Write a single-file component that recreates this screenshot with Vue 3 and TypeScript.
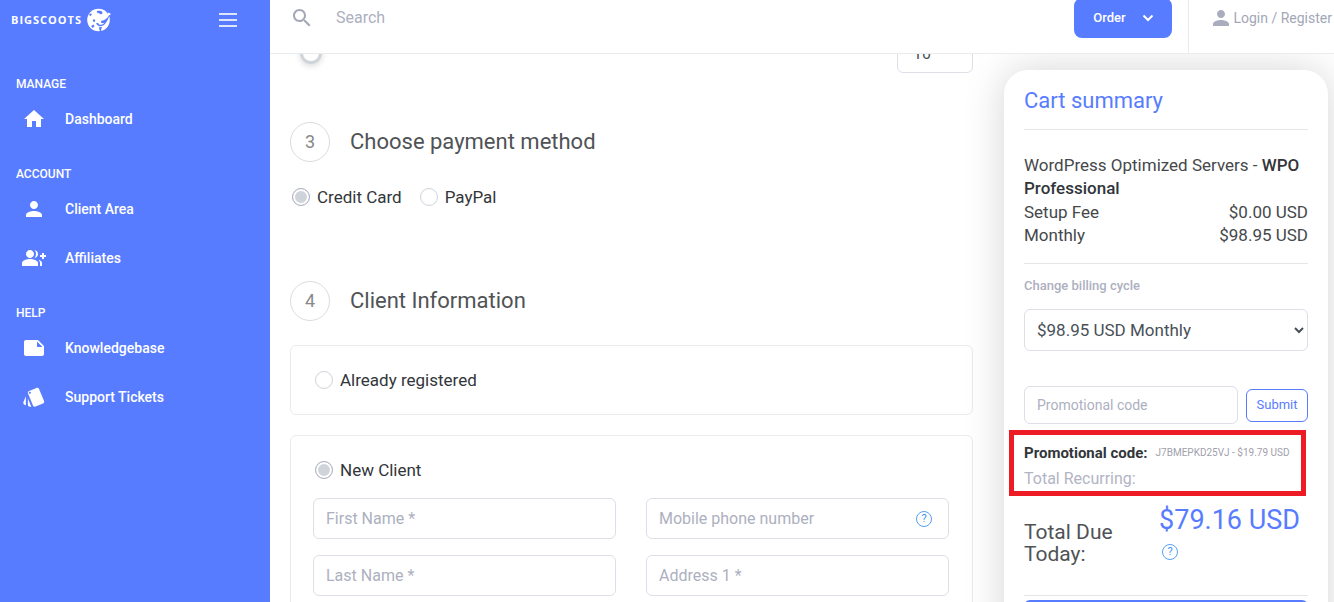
<script setup lang="ts">
import { ref } from 'vue'

interface NavItem { label: string; icon: string }
interface NavGroup { title: string; items: NavItem[] }

const icons: Record<string, string> = {
  home: 'M10 20v-6h4v6h5v-8h3L12 3 2 12h3v8z',
  person: 'M12 12c2.21 0 4-1.79 4-4s-1.79-4-4-4-4 1.79-4 4 1.79 4 4 4zm0 2c-2.67 0-8 1.34-8 4v2h16v-2c0-2.66-5.33-4-8-4z',
  group: 'M24 9h-2V7h-2v2h-2v2h2v2h2v-2h2zM8 12c2.21 0 4-1.79 4-4s-1.79-4-4-4-4 1.79-4 4 1.79 4 4 4zM8 13c-2.67 0-8 1.34-8 4v3h16v-3c0-2.66-5.33-4-8-4zM12.51 4.05C13.43 5.11 14 6.49 14 8s-.57 2.89-1.49 3.95C14.47 11.7 16 10.04 16 8s-1.53-3.7-3.49-3.95zM16.53 13.83C17.42 14.66 18 15.7 18 17v3h2v-3c0-1.45-1.59-2.51-3.47-3.17z',
  note: 'M22 10l-6-6H4c-1.1 0-2 .9-2 2v12.01c0 1.1.9 1.99 2 1.99l16-.01c1.1 0 2-.89 2-1.99v-8zm-7-4.5l5.5 5.5H15V5.5z',
  style: 'M2.53 19.65l1.34.56v-9.03l-2.43 5.86c-.41 1.02.08 2.19 1.09 2.61zm19.5-3.7L17.07 3.98c-.31-.75-1.04-1.21-1.81-1.23-.26 0-.53.04-.79.15L7.1 5.95c-.75.31-1.21 1.03-1.23 1.8-.01.27.04.54.15.8l4.96 11.97c.31.76 1.05 1.22 1.83 1.23.26 0 .52-.05.77-.15l7.36-3.05c1.02-.42 1.51-1.59 1.09-2.6zM7.88 8.75c-.55 0-1-.45-1-1s.45-1 1-1 1 .45 1 1-.45 1-1 1zm-2 11c0 1.1.9 2 2 2h1.45l-3.45-8.34v6.34z'
}

const groups: NavGroup[] = [
  { title: 'MANAGE', items: [{ label: 'Dashboard', icon: 'home' }] },
  { title: 'ACCOUNT', items: [{ label: 'Client Area', icon: 'person' }, { label: 'Affiliates', icon: 'group' }] },
  { title: 'HELP', items: [{ label: 'Knowledgebase', icon: 'note' }, { label: 'Support Tickets', icon: 'style' }] }
]

const fields = [
  { id: 'first', label: 'First Name *', help: false },
  { id: 'phone', label: 'Mobile phone number', help: true },
  { id: 'last', label: 'Last Name *', help: false },
  { id: 'address', label: 'Address 1 *', help: false }
]

const payment = ref('card')
const client = ref('new')
const amount = ref(0)
const quantity = ref('10')
</script>

<template>
  <div class="shell">
    <aside class="sidebar">
      <div class="brand">
        <a href="#" class="logo">
          <span>BIGSCOOTS</span>
          <svg viewBox="0 0 24 24" aria-hidden="true">
            <circle cx="11.5" cy="12" r="11.3" fill="#fff" />
            <path d="M10 3c1.8-.6 4-.4 5 .6 1 1.2.4 2.4-.8 2.6-1 .2-1.4-.8-2.4-1-1.2-.2-2.4-.8-1.800-2.200z" fill="#587cff" />
            <path d="M5.800 12c1-1.500 2.700-.6 2.400 1-.4 1.400-2.500 1.200-2.400-1zM23 4.500c-1.400 4.500-3.600 7-6.400 7.700-1.400.3-2.800.6-2.600 1.800.3 1.300 2 1.400 3.400.8-1 1.900-3.400 2.300-5.200 1.600-.8-1.300-2.200-1.700-3-1 .4 1.200 1.400 1.800 2.800 2.500 2 .6 4.800-.2 6.300-2.400 1.900-2.300 3.500-5 4.700-11z" fill="#587cff" />
            <path d="M9 18.500l3.500.6-.6 1.800 1 1-.5 2.100h2.100l-.4-2.900 1-2.200z" fill="#587cff" />
            <path d="M2 6.500l2.200-1.200.6 1.500L3 8.200zM4 18l2.500-1.500 1 1.800-1.700 1.700z" fill="#587cff" />
            <path d="M18.500 7c1.500-.4 2.500-1 3-2.500l2.500 1.500-1.200 1c-1 .8-2.500 1-4.300 0z" fill="#fff" />
          </svg>
        </a>
        <button class="menu" aria-label="Toggle menu"><i></i><i></i><i></i></button>
      </div>
      <nav>
        <section v-for="group in groups" :key="group.title">
          <h2>{{ group.title }}</h2>
          <a v-for="item in group.items" :key="item.label" href="#">
            <svg viewBox="0 0 24 24" aria-hidden="true"><path :d="icons[item.icon]" fill-rule="evenodd" /></svg>
            <span>{{ item.label }}</span>
          </a>
        </section>
      </nav>
    </aside>

    <div class="page">
      <header>
        <label class="search">
          <svg viewBox="0 0 24 24" aria-hidden="true"><path d="M15.5 14h-.79l-.28-.27C15.41 12.59 16 11.11 16 9.5 16 5.91 13.09 3 9.5 3S3 5.91 3 9.5 5.91 16 9.5 16c1.61 0 3.09-.59 4.23-1.57l.27.28v.79l5 4.99L20.49 19l-4.99-5zm-6 0C7.01 14 5 11.99 5 9.5S7.01 5 9.5 5 14 7.01 14 9.5 11.99 14 9.5 14z" /></svg>
          <input type="search" placeholder="Search" aria-label="Search">
        </label>
        <button class="order">Order
          <svg viewBox="0 0 12 8" aria-hidden="true"><path d="M1.5 1.5L6 6l4.5-4.5" /></svg>
        </button>
        <a href="#" class="login">
          <svg viewBox="0 0 24 24" aria-hidden="true"><path :d="icons.person" /></svg>Login / Register
        </a>
      </header>

      <div class="viewport">
        <main>
          <div class="amount">
            <input v-model="amount" type="range" min="0" max="100" aria-label="Amount">
            <input v-model="quantity" class="qty" type="text" aria-label="Quantity">
          </div>

          <div class="step"><b>3</b><h3>Choose payment method</h3></div>
          <div class="methods">
            <label><input v-model="payment" type="radio" name="payment" value="card">Credit Card</label>
            <label><input v-model="payment" type="radio" name="payment" value="paypal">PayPal</label>
          </div>

          <div class="step"><b>4</b><h3>Client Information</h3></div>
          <div class="card">
            <label><input v-model="client" type="radio" name="client" value="registered">Already registered</label>
          </div>
          <div class="card">
            <label><input v-model="client" type="radio" name="client" value="new">New Client</label>
            <div class="fields">
              <div v-for="field in fields" :key="field.id" class="field">
                <input :id="field.id" type="text" :placeholder="field.label" :aria-label="field.label">
                <button v-if="field.help" class="help" aria-label="Help">?</button>
              </div>
            </div>
          </div>
        </main>

        <aside class="cart">
          <h3>Cart summary</h3>
          <div class="product">
            <p>WordPress Optimized Servers - <strong>WPO Professional</strong></p>
            <div class="line"><span>Setup Fee</span><span>$0.00 USD</span></div>
            <div class="line"><span>Monthly</span><span>$98.95 USD</span></div>
          </div>
          <label class="cycle" for="cycle">Change billing cycle</label>
          <select id="cycle"><option>$98.95 USD Monthly</option></select>
          <form class="promo" @submit.prevent>
            <input type="text" placeholder="Promotional code" aria-label="Promotional code">
            <button>Submit</button>
          </form>
          <div class="recap">
            <p><strong>Promotional code:</strong><small>J7BMEPKD25VJ - $19.79 USD</small></p>
            <p class="recurring">Total Recurring:</p>
          </div>
          <div class="due">
            <h4>Total Due Today:</h4>
            <div><output>$79.16 USD</output><button class="help" aria-label="Help">?</button></div>
          </div>
          <button class="checkout" aria-label="Checkout"></button>
        </aside>
      </div>
    </div>
  </div>
</template>

<style>
body { margin: 0; overflow: hidden; background: #fff; }
</style>

<style scoped>
* { box-sizing: border-box; }
.shell { display: grid; grid-template-columns: 270px minmax(0, 1fr); height: 100vh; overflow: hidden; font: 16px/24px Roboto, "Open Sans", sans-serif; color: #32363a; }
h2, h3, h4, p { margin: 0; font-weight: 400; }
a { text-decoration: none; color: inherit; }
button, input, select { font: inherit; margin: 0; }
button { cursor: pointer; padding: 0; border: 0; background: none; }
input::placeholder { color: #adb0c0; opacity: 1; }

.sidebar { background: #587cff; color: #fff; }
.brand { display: flex; justify-content: space-between; align-items: center; height: 40px; padding: 0 33px 0 11px; }
.logo { display: flex; align-items: center; gap: 5px; font: 700 11px/24px "Open Sans", sans-serif; letter-spacing: 1px; }
.logo svg { width: 24px; height: 24px; }
.menu { display: grid; gap: 4px; width: 18px; }
.menu i { height: 2px; background: #dde4ff; }
nav { display: grid; gap: 21px; padding: 34px 16px 0; font-size: 14px; font-weight: 500; }
nav h2 { font-size: 12px; font-weight: 500; line-height: 20px; }
nav a { display: flex; align-items: center; gap: 19px; height: 49px; padding-left: 6px; }
nav svg { width: 24px; height: 24px; fill: #fff; }

.page { display: flex; flex-direction: column; min-width: 0; min-height: 0; }
header { flex: none; display: flex; align-items: center; height: 72px; margin-top: -18px; border-bottom: 1px solid #e9ecef; }
.search { flex: 1; display: flex; align-items: center; gap: 22px; padding-left: 20px; }
.search svg { width: 24px; height: 24px; fill: #a3a7b7; }
.search input { flex: 1; height: 40px; padding: 0; border: 0; outline: 0; }
.order { display: flex; align-items: center; justify-content: center; gap: 16px; width: 98px; height: 40px; margin-right: 16px; border-radius: 8px; background: #587cff; color: #fff; font-size: 13px; font-weight: 500; }
.order svg { width: 12px; height: 8px; fill: none; stroke: #fff; stroke-width: 2; }
.login { display: flex; align-items: center; align-self: stretch; padding: 0 2px 0 20px; border-left: 1px solid #e9ecef; color: #a3a7b7; font-size: 14px; white-space: nowrap; }
.login svg { width: 24px; height: 24px; fill: #a9adbd; }

.viewport { flex: 1; min-height: 0; display: grid; grid-template-columns: minmax(0, 1fr) 324px; align-items: start; gap: 31px; padding: 0 6px 0 20px; overflow: hidden; }
main { margin-top: -21px; }
.amount { display: flex; align-items: center; justify-content: space-between; gap: 24px; }
.amount input[type="range"] { flex: 1; height: 22px; margin-left: 10px; appearance: none; background: none; }
.amount input[type="range"]::-webkit-slider-thumb { appearance: none; width: 22px; height: 22px; border: 3px solid #ced4da; border-radius: 50%; background: #fff; box-shadow: 0 2px 6px rgba(0, 0, 0, .15); }
.amount .qty { width: 76px; height: 40px; padding: 0 15px; border: 1px solid #dddfe8; border-radius: 6px; background: #fff; color: #495057; }

.step { display: flex; align-items: center; gap: 20px; margin-top: 49px; }
.step b { display: grid; place-items: center; width: 40px; height: 40px; border: 1px solid #dcdcdc; border-radius: 50%; font-size: 18px; font-weight: 400; color: #888; }
.step h3 { font-size: 22px; line-height: 24px; color: #505356; }
.methods { display: flex; gap: 18px; margin: 23px 0 72px 2px; }
.methods + .step { margin-top: 0; }
label { display: flex; align-items: center; }
.methods label, .card label { font-size: 17px; }
input[type="radio"] { appearance: none; width: 18px; height: 18px; margin-right: 7px; border: 1px solid #ced4da; border-radius: 50%; background: #fff; }
input[type="radio"]:checked { border-color: #adb0c0; background: #ced4da; box-shadow: inset 0 0 0 2px #fff; }
.card { margin-top: 20px; padding: 22px 23px 22px 22px; border: 1px solid #e9ebef; border-radius: 6px; }
.step + .card { margin-top: 24px; }
.card > label { margin-left: 2px; }
.fields { display: grid; grid-template-columns: 1fr 1fr; gap: 16px 30px; margin-top: 16px; }
.field { position: relative; }
.field input { width: 100%; height: 41px; padding: 0 12px; border: 1px solid #dddfe8; border-radius: 6px; background: none; }
.help { width: 16px; height: 16px; border: 1px solid #55a0f5; border-radius: 50%; color: #3f93f3; font-size: 11px; line-height: 14px; }
.field .help { position: absolute; right: 17px; top: 13px; }

.cart { margin-top: 16px; padding: 20px; border-radius: 24px; background: #fff; box-shadow: 0 0 40px rgba(0, 12, 6, .17); }
.cart h3 { padding-bottom: 17px; border-bottom: 1px solid #e4e6e9; font-size: 22px; line-height: 22px; color: #587cff; }
.product { padding: 24px 0 16px; border-bottom: 1px solid #e4e6e9; font-size: 17px; line-height: 23px; color: #45484b; }
.product p { margin-bottom: 1px; }
.line { display: flex; justify-content: space-between; }
strong { font-weight: 500; color: #32363a; }
.cycle { margin: 10px 0 11px; font-size: 13px; font-weight: 500; color: #adb0c0; }
.cart select { width: 100%; height: 42px; padding: 0 8px; border: 1px solid #dddfe8; border-radius: 6px; background: #fff; color: #495057; font-size: 17px; }
.promo { display: flex; align-items: center; gap: 8px; margin-top: 35px; }
.promo input { flex: 1; min-width: 0; height: 38px; padding: 0 12px; border: 1px solid #dddfe8; border-radius: 6px; font-size: 14px; }
.promo button { width: 62px; height: 33px; border: 1px solid #587cff; border-radius: 6px; color: #587cff; font-size: 13px; }
.recap { margin: 6px 2px 0 -15px; padding: 4px 0 0 10px; border: 5px solid #ed1c24; white-space: nowrap; line-height: 28px; }
.recap p { display: flex; align-items: center; gap: 8px; }
.recap strong { font-size: 15px; font-weight: 700; }
.recap small { font-size: 10px; color: #9fa0ab; }
.recap .recurring { line-height: 24px; color: #b2b4c4; }
.due { display: flex; justify-content: space-between; gap: 24px; padding: 8px 8px 30px 0; border-bottom: 1px solid #e4e6e9; }
.due h4 { padding-top: 17px; font-size: 21px; line-height: 22px; color: #505356; }
.due output { display: block; font-size: 27px; line-height: 32px; color: #587cff; white-space: nowrap; }
.due .help { display: block; margin: 8px 0 0 3px; }
.checkout { display: block; width: 100%; height: 42px; margin-top: 4px; border-radius: 6px; background: #587cff; }
</style>
